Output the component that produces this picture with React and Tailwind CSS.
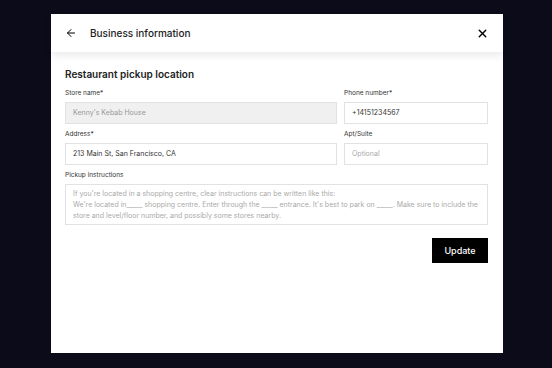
import { ArrowLeft, X } from 'lucide-react';

const Field = ({ label, children }) => (
  <div className="flex flex-col">
    <label className="text-[6.5px] text-[#333] mb-[4px] leading-[9px]">{label}</label>
    {children}
  </div>
);

const App = () => {
  return (
    <div className="w-[552px] h-[368px] bg-[#0b0b1a] pt-[14px] pl-[51px]" style={{ fontFamily: 'Inter, "Liberation Sans", sans-serif' }}>
      <div className="w-[452px] h-[339px] bg-white flex flex-col">
        {/* Header */}
        <div className="h-[38px] flex items-center px-[14px] shadow-[0_4px_8px_rgba(0,0,0,0.08)] relative z-10">
          <ArrowLeft size={12} strokeWidth={2} className="text-black" />
          <span className="ml-[13px] text-[10px] font-medium text-[#222]">Business information</span>
          <X size={13} strokeWidth={2.5} className="ml-auto text-black" />
        </div>

        <div className="pl-[14px] pt-[15px] pr-[15px]">
          <h2 className="text-[10px] font-semibold text-[#222] leading-[14px]">Restaurant pickup location</h2>

          <div className="grid grid-cols-[272px_144px] gap-x-[7px] gap-y-[6px] mt-[8px]">
            <Field label="Store name*">
              <div className="h-[22px] bg-[#f0f0f0] border border-[#e2e2e2] flex items-center px-[7px] text-[7px] text-[#999]">
                Kenny's Kebab House
              </div>
            </Field>
            <Field label="Phone number*">
              <div className="h-[22px] bg-white border border-[#e2e2e2] flex items-center px-[7px] text-[7px] text-[#333]">
                +14151234567
              </div>
            </Field>
            <Field label="Address*">
              <div className="h-[22px] bg-white border border-[#e2e2e2] flex items-center px-[7px] text-[7px] text-[#333]">
                213 Main St, San Francisco, CA
              </div>
            </Field>
            <Field label="Apt/Suite">
              <div className="h-[22px] bg-white border border-[#e2e2e2] flex items-center px-[7px] text-[7px] text-[#aaa]">
                Optional
              </div>
            </Field>
            <div className="col-span-2">
              <Field label="Pickup instructions">
                <div className="h-[41px] bg-white border border-[#e2e2e2] px-[7px] pt-[3px] text-[7px] leading-[11px] text-[#aaa]">
                  <div>If you're located in a shopping centre, clear instructions can be written like this:</div>
                  <div>We're located in_____ shopping centre. Enter through the _____ entrance. It's best to park on _____. Make sure to include the store and level/floor number, and possibly some stores nearby.</div>
                </div>
              </Field>
            </div>
          </div>

          <div className="flex justify-end mt-[13px]">
            <button className="w-[56px] h-[25px] bg-black text-white text-[9px] font-medium">Update</button>
          </div>
        </div>
      </div>
    </div>
  );
};

export default App;
